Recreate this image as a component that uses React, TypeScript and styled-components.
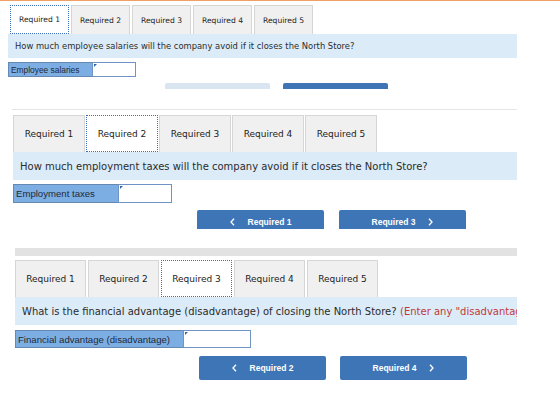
import styled, { createGlobalStyle } from 'styled-components'

const GlobalStyle = createGlobalStyle`
  html, body { margin: 0; padding: 0; background: #fff; }
  body { width: 560px; height: 420px; overflow: hidden; }
`

type Size = {
  left: number
  tabW: number
  tabH: number
  tabGap: number
  tabFont: number
  barH: number
  barFont: number
  labelW: number
  inputW: number
  rowH: number
  rowGap: number
  labelFont: number
  navLeft: number
  navGap: number
  btnW: number
  btnH: number
  btnShown: number
  btnGap: number
  btnFont: number
}

const SMALL: Size = {
  left: 8, tabW: 59, tabH: 29, tabGap: 2, tabFont: 7.6, barH: 24, barFont: 8.4,
  labelW: 84, inputW: 44, rowH: 15, rowGap: 4, labelFont: 8.4,
  navLeft: 157, navGap: 6, btnW: 105, btnH: 20, btnShown: 6, btnGap: 13, btnFont: 7,
}

const MID: Size = {
  left: 13, tabW: 72, tabH: 37, tabGap: 1, tabFont: 9, barH: 28, barFont: 10,
  labelW: 105, inputW: 54, rowH: 19, rowGap: 4, labelFont: 9.6,
  navLeft: 184, navGap: 7, btnW: 127, btnH: 24, btnShown: 19, btnGap: 15, btnFont: 8.5,
}

const BIG: Size = {
  left: 15, tabW: 71, tabH: 37, tabGap: 2, tabFont: 9, barH: 28, barFont: 10,
  labelW: 168, inputW: 68, rowH: 18, rowGap: 5, labelFont: 9.6,
  navLeft: 184, navGap: 8, btnW: 127, btnH: 24, btnShown: 24, btnGap: 14, btnFont: 8.5,
}

const Page = styled.div`
  width: 560px;
  height: 420px;
  overflow: hidden;
  font-family: 'DejaVu Sans', Verdana, sans-serif;
  color: #333;
`

const TopRule = styled.div`
  height: 1px;
  background: #f0a064;
`

const Panel = styled.div<{ $s: Size; $top: number }>`
  width: ${({ $s }) => 517 - $s.left}px;
  margin-left: ${({ $s }) => $s.left}px;
  margin-top: ${({ $top }) => $top}px;
`

const TabRow = styled.div<{ $s: Size; $shift?: number }>`
  display: flex;
  gap: ${({ $s }) => $s.tabGap}px;
  margin-left: ${({ $shift }) => $shift || 0}px;
`

const Tab = styled.div<{ $s: Size; $active?: boolean }>`
  box-sizing: border-box;
  width: ${({ $s }) => $s.tabW}px;
  height: ${({ $s }) => $s.tabH}px;
  display: flex;
  align-items: center;
  justify-content: center;
  font-size: ${({ $s }) => $s.tabFont}px;
  color: #222;
  background: ${({ $active }) => ($active ? '#fff' : '#f0f0f0')};
  border: 1px ${({ $active }) => ($active ? 'dotted #3d6fb8' : 'solid #d6d6d6')};
  border-bottom: ${({ $active }) => ($active ? '1px dotted #3d6fb8' : 'none')};
`

const Question = styled.div<{ $s: Size }>`
  height: ${({ $s }) => $s.barH}px;
  background: #dcebf8;
  display: flex;
  align-items: center;
  padding-left: 7px;
  font-size: ${({ $s }) => $s.barFont}px;
  color: #2b2b2b;
  white-space: nowrap;
  overflow: hidden;
`

const Note = styled.span`
  color: #c2383a;
  margin-left: 0.35em;
`

const AnswerRow = styled.div<{ $s: Size }>`
  display: flex;
  margin-top: ${({ $s }) => $s.rowGap}px;
  height: ${({ $s }) => $s.rowH}px;
`

const Label = styled.div<{ $s: Size }>`
  box-sizing: border-box;
  width: ${({ $s }) => $s.labelW}px;
  background: #7daee3;
  border: 1px solid #6689b4;
  border-right: none;
  display: flex;
  align-items: center;
  padding-left: 2px;
  font-family: 'Liberation Sans', Arial, sans-serif;
  font-size: ${({ $s }) => $s.labelFont}px;
  color: #1f2a38;
  white-space: nowrap;
`

const Input = styled.div<{ $s: Size }>`
  position: relative;
  box-sizing: border-box;
  width: ${({ $s }) => $s.inputW}px;
  background: #fff;
  border: 1px solid #6f93c4;

  &::before {
    content: '';
    position: absolute;
    left: 1px;
    top: 1px;
    border-top: 3px solid #2f63b0;
    border-right: 3px solid transparent;
  }
`

const NavRow = styled.div<{ $s: Size }>`
  display: flex;
  gap: ${({ $s }) => $s.btnGap}px;
  margin-left: ${({ $s }) => $s.navLeft}px;
  margin-top: ${({ $s }) => $s.navGap}px;
  height: ${({ $s }) => $s.btnShown}px;
  overflow: hidden;
`

const NavButton = styled.div<{ $s: Size; $faded?: boolean }>`
  flex: none;
  width: ${({ $s }) => $s.btnW}px;
  height: ${({ $s }) => $s.btnH}px;
  border-radius: 2px;
  background: ${({ $faded }) => ($faded ? '#d9e5f1' : '#3d75b7')};
  display: flex;
  align-items: center;
  justify-content: center;
  gap: 13px;
  font-family: 'Liberation Sans', Arial, sans-serif;
  font-weight: bold;
  font-size: ${({ $s }) => $s.btnFont}px;
  color: #fff;
`

const Divider = styled.div<{ $left: number; $h: number; $top: number; $color: string }>`
  margin-left: ${({ $left }) => $left}px;
  margin-top: ${({ $top }) => $top}px;
  width: ${({ $left }) => 517 - $left}px;
  height: ${({ $h }) => $h}px;
  background: ${({ $color }) => $color};
`

const Chevron = ({ dir }: { dir: 'left' | 'right' }) => (
  <svg width="5" height="8" viewBox="0 0 5 8">
    <polyline
      points={dir === 'left' ? '4,0.8 1,4 4,7.2' : '1,0.8 4,4 1,7.2'}
      fill="none"
      stroke="#fff"
      strokeWidth="1.3"
    />
  </svg>
)

const TABS = ['Required 1', 'Required 2', 'Required 3', 'Required 4', 'Required 5']

function Tabs({ s, active, shift }: { s: Size; active: number; shift?: number }) {
  return (
    <TabRow $s={s} $shift={shift}>
      {TABS.map((t, i) => (
        <Tab key={t} $s={s} $active={i === active}>{t}</Tab>
      ))}
    </TabRow>
  )
}

export default function App() {
  return (
    <Page>
      <GlobalStyle />
      <TopRule />

      <Panel $s={SMALL} $top={4}>
        <Tabs s={SMALL} active={0} shift={2} />
        <Question $s={SMALL}>
          How much employee salaries will the company avoid if it closes the North Store?
        </Question>
        <AnswerRow $s={SMALL}>
          <Label $s={SMALL}>Employee salaries</Label>
          <Input $s={SMALL} />
        </AnswerRow>
        <NavRow $s={SMALL}>
          <NavButton $s={SMALL} $faded />
          <NavButton $s={SMALL} />
        </NavRow>
      </Panel>

      <Divider $left={12} $h={1} $top={20} $color="#e4e4e4" />

      <Panel $s={MID} $top={5}>
        <Tabs s={MID} active={1} />
        <Question $s={MID}>
          How much employment taxes will the company avoid if it closes the North Store?
        </Question>
        <AnswerRow $s={MID}>
          <Label $s={MID}>Employment taxes</Label>
          <Input $s={MID} />
        </AnswerRow>
        <NavRow $s={MID}>
          <NavButton $s={MID}>
            <Chevron dir="left" />
            Required 1
          </NavButton>
          <NavButton $s={MID}>
            Required 3
            <Chevron dir="right" />
          </NavButton>
        </NavRow>
      </Panel>

      <Divider $left={15} $h={8} $top={19} $color="#e2e2e2" />

      <Panel $s={BIG} $top={4}>
        <Tabs s={BIG} active={2} />
        <Question $s={BIG}>
          What is the financial advantage (disadvantage) of closing the North Store?
          <Note>(Enter any "disadvantage" with a minus sign.)</Note>
        </Question>
        <AnswerRow $s={BIG}>
          <Label $s={BIG}>Financial advantage (disadvantage)</Label>
          <Input $s={BIG} />
        </AnswerRow>
        <NavRow $s={BIG}>
          <NavButton $s={BIG}>
            <Chevron dir="left" />
            Required 2
          </NavButton>
          <NavButton $s={BIG}>
            Required 4
            <Chevron dir="right" />
          </NavButton>
        </NavRow>
      </Panel>
    </Page>
  )
}
